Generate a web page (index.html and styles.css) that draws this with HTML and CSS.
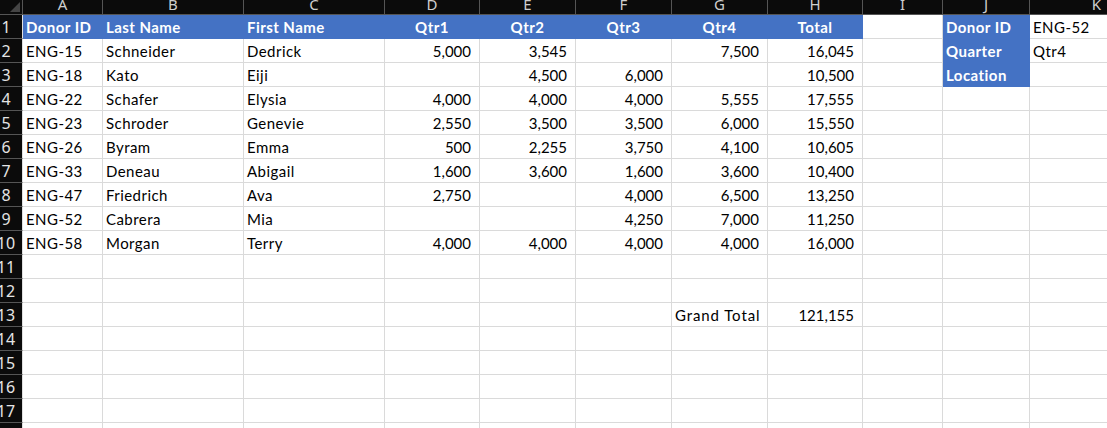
FILE: index.html
```html
<!DOCTYPE html>
<html>
<head>
<meta charset="utf-8">
<link rel="stylesheet" href="styles.css">
</head>
<body>
<div class="sheet">
  <div class="corner"><svg class="tri" width="10" height="10" viewBox="0 0 10 10"><polygon points="10,0 10,10 0,10" fill="#454545"/></svg></div>
  <div class="ch">A</div><div class="ch">B</div><div class="ch">C</div><div class="ch">D</div><div class="ch">E</div><div class="ch">F</div><div class="ch">G</div><div class="ch">H</div><div class="ch">I</div><div class="ch">J</div><div class="ch">K</div>

  <div class="rh"><span>1</span></div>
  <div class="c b">Donor ID</div><div class="c b">Last Name</div><div class="c b">First Name</div><div class="c b m">Qtr1</div><div class="c b m">Qtr2</div><div class="c b m">Qtr3</div><div class="c b m">Qtr4</div><div class="c b m">Total</div><div class="c"></div><div class="c b">Donor ID</div><div class="c">ENG-52</div>

  <div class="rh"><span>2</span></div>
  <div class="c">ENG-15</div><div class="c">Schneider</div><div class="c">Dedrick</div><div class="c n">5,000</div><div class="c n">3,545</div><div class="c n"></div><div class="c n">7,500</div><div class="c n">16,045</div><div class="c"></div><div class="c b">Quarter</div><div class="c">Qtr4</div>

  <div class="rh"><span>3</span></div>
  <div class="c">ENG-18</div><div class="c">Kato</div><div class="c">Eiji</div><div class="c n"></div><div class="c n">4,500</div><div class="c n">6,000</div><div class="c n"></div><div class="c n">10,500</div><div class="c"></div><div class="c b">Location</div><div class="c"></div>

  <div class="rh"><span>4</span></div>
  <div class="c">ENG-22</div><div class="c">Schafer</div><div class="c">Elysia</div><div class="c n">4,000</div><div class="c n">4,000</div><div class="c n">4,000</div><div class="c n">5,555</div><div class="c n">17,555</div><div class="c"></div><div class="c"></div><div class="c"></div>

  <div class="rh"><span>5</span></div>
  <div class="c">ENG-23</div><div class="c">Schroder</div><div class="c">Genevie</div><div class="c n">2,550</div><div class="c n">3,500</div><div class="c n">3,500</div><div class="c n">6,000</div><div class="c n">15,550</div><div class="c"></div><div class="c"></div><div class="c"></div>

  <div class="rh"><span>6</span></div>
  <div class="c">ENG-26</div><div class="c">Byram</div><div class="c">Emma</div><div class="c n">500</div><div class="c n">2,255</div><div class="c n">3,750</div><div class="c n">4,100</div><div class="c n">10,605</div><div class="c"></div><div class="c"></div><div class="c"></div>

  <div class="rh"><span>7</span></div>
  <div class="c">ENG-33</div><div class="c">Deneau</div><div class="c">Abigail</div><div class="c n">1,600</div><div class="c n">3,600</div><div class="c n">1,600</div><div class="c n">3,600</div><div class="c n">10,400</div><div class="c"></div><div class="c"></div><div class="c"></div>

  <div class="rh"><span>8</span></div>
  <div class="c">ENG-47</div><div class="c">Friedrich</div><div class="c">Ava</div><div class="c n">2,750</div><div class="c n"></div><div class="c n">4,000</div><div class="c n">6,500</div><div class="c n">13,250</div><div class="c"></div><div class="c"></div><div class="c"></div>

  <div class="rh"><span>9</span></div>
  <div class="c">ENG-52</div><div class="c">Cabrera</div><div class="c">Mia</div><div class="c n"></div><div class="c n"></div><div class="c n">4,250</div><div class="c n">7,000</div><div class="c n">11,250</div><div class="c"></div><div class="c"></div><div class="c"></div>

  <div class="rh"><span>10</span></div>
  <div class="c">ENG-58</div><div class="c">Morgan</div><div class="c">Terry</div><div class="c n">4,000</div><div class="c n">4,000</div><div class="c n">4,000</div><div class="c n">4,000</div><div class="c n">16,000</div><div class="c"></div><div class="c"></div><div class="c"></div>

  <div class="rh"><span>11</span></div>
  <div class="c"></div><div class="c"></div><div class="c"></div><div class="c"></div><div class="c"></div><div class="c"></div><div class="c"></div><div class="c"></div><div class="c"></div><div class="c"></div><div class="c"></div>

  <div class="rh"><span>12</span></div>
  <div class="c"></div><div class="c"></div><div class="c"></div><div class="c"></div><div class="c"></div><div class="c"></div><div class="c"></div><div class="c"></div><div class="c"></div><div class="c"></div><div class="c"></div>

  <div class="rh"><span>13</span></div>
  <div class="c"></div><div class="c"></div><div class="c"></div><div class="c"></div><div class="c"></div><div class="c"></div><div class="c wide">Grand Total</div><div class="c n">121,155</div><div class="c"></div><div class="c"></div><div class="c"></div>

  <div class="rh"><span>14</span></div>
  <div class="c"></div><div class="c"></div><div class="c"></div><div class="c"></div><div class="c"></div><div class="c"></div><div class="c"></div><div class="c"></div><div class="c"></div><div class="c"></div><div class="c"></div>

  <div class="rh"><span>15</span></div>
  <div class="c"></div><div class="c"></div><div class="c"></div><div class="c"></div><div class="c"></div><div class="c"></div><div class="c"></div><div class="c"></div><div class="c"></div><div class="c"></div><div class="c"></div>

  <div class="rh"><span>16</span></div>
  <div class="c"></div><div class="c"></div><div class="c"></div><div class="c"></div><div class="c"></div><div class="c"></div><div class="c"></div><div class="c"></div><div class="c"></div><div class="c"></div><div class="c"></div>

  <div class="rh"><span>17</span></div>
  <div class="c"></div><div class="c"></div><div class="c"></div><div class="c"></div><div class="c"></div><div class="c"></div><div class="c"></div><div class="c"></div><div class="c"></div><div class="c"></div><div class="c"></div>

  <div class="rh"><span>18</span></div>
  <div class="c"></div><div class="c"></div><div class="c"></div><div class="c"></div><div class="c"></div><div class="c"></div><div class="c"></div><div class="c"></div><div class="c"></div><div class="c"></div><div class="c"></div>
</div>
</body>
</html>
```

FILE: styles.css
```css
html, body {
  margin: 0;
  padding: 0;
  background: #ffffff;
  overflow: hidden;
}

.sheet {
  display: grid;
  grid-template-columns: 23px 80px 141px 141px 95px 96px 96px 96px 95px 80px 87px 134px;
  grid-template-rows: 15px;
  grid-auto-rows: 24px;
  width: max-content;
  font-family: "Lato", "Liberation Sans", sans-serif;
  font-size: 15px;
  color: #000000;
}

.corner {
  background: #0b0b0b;
  border-right: 1px solid #555555;
  border-bottom: 1px solid #555555;
  box-sizing: border-box;
  display: flex;
  align-items: flex-end;
  justify-content: flex-end;
  padding: 0 2px 2px 0;
}

.tri {
  display: block;
}

.ch {
  background: #0b0b0b;
  color: #cfcfcf;
  border-right: 1px solid #555555;
  border-bottom: 1px solid #555555;
  box-sizing: border-box;
  overflow: hidden;
  font-family: "Noto Sans", "Open Sans", sans-serif;
  font-size: 15px;
  line-height: 8px;
  text-align: center;
}

.rh {
  background: #0b0b0b;
  color: #e4e4e4;
  border-bottom: 1px solid #555555;
  border-right: 1px solid #e0e0e0;
  box-sizing: border-box;
  overflow: hidden;
  display: flex;
  justify-content: center;
  padding: 2px 10px 0 0;
  font-family: "Noto Sans", "Open Sans", sans-serif;
  font-size: 16px;
  line-height: 21px;
}

.rh span {
  white-space: nowrap;
}

.c {
  border-right: 1px solid #dadada;
  border-bottom: 1px solid #dadada;
  box-sizing: border-box;
  padding: 1px 3px 0 3px;
  line-height: 22px;
  letter-spacing: 0.45px;
  white-space: nowrap;
  overflow: visible;
}

.wide {
  letter-spacing: 0.9px;
}

.n {
  text-align: right;
  padding-right: 8px;
  letter-spacing: 0;
}

.b {
  background: #4472c4;
  border-color: #4472c4;
  color: #ffffff;
  font-weight: 700;
}

.m {
  text-align: center;
  padding: 1px 0 0 0;
}
```
